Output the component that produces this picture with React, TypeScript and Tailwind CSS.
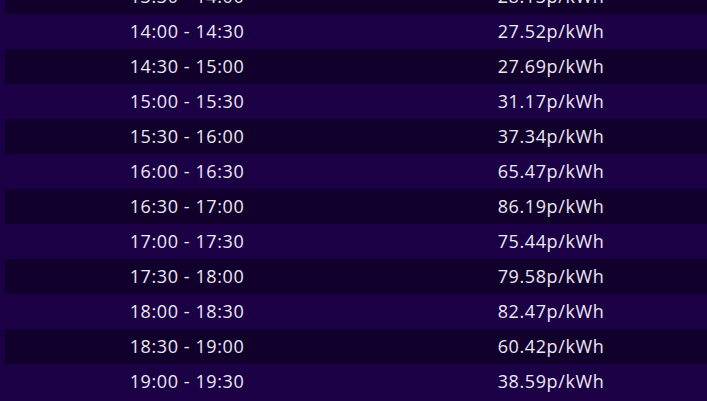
const rows: [string, string][] = [
  ['13:30 - 14:00', '28.13p/kWh'],
  ['14:00 - 14:30', '27.52p/kWh'],
  ['14:30 - 15:00', '27.69p/kWh'],
  ['15:00 - 15:30', '31.17p/kWh'],
  ['15:30 - 16:00', '37.34p/kWh'],
  ['16:00 - 16:30', '65.47p/kWh'],
  ['16:30 - 17:00', '86.19p/kWh'],
  ['17:00 - 17:30', '75.44p/kWh'],
  ['17:30 - 18:00', '79.58p/kWh'],
  ['18:00 - 18:30', '82.47p/kWh'],
  ['18:30 - 19:00', '60.42p/kWh'],
  ['19:00 - 19:30', '38.59p/kWh'],
];

export default function App() {
  return (
    <div className="h-[401px] w-[707px] overflow-hidden bg-[#1c0046] pl-[5px]">
      <div
        className="mt-[-21px] w-[728px] text-[18px] font-medium tracking-[0.6px] text-[#ebe8f2]"
        style={{ fontFamily: '"Open Sans", sans-serif' }}
      >
        {rows.map(([slot, price], i) => (
          <div key={slot} className={`grid h-[35px] grid-cols-2 items-center text-center ${i % 2 === 0 ? 'bg-[#12002c]' : ''}`}>
            <span>{slot}</span>
            <span>{price}</span>
          </div>
        ))}
      </div>
    </div>
  );
}
